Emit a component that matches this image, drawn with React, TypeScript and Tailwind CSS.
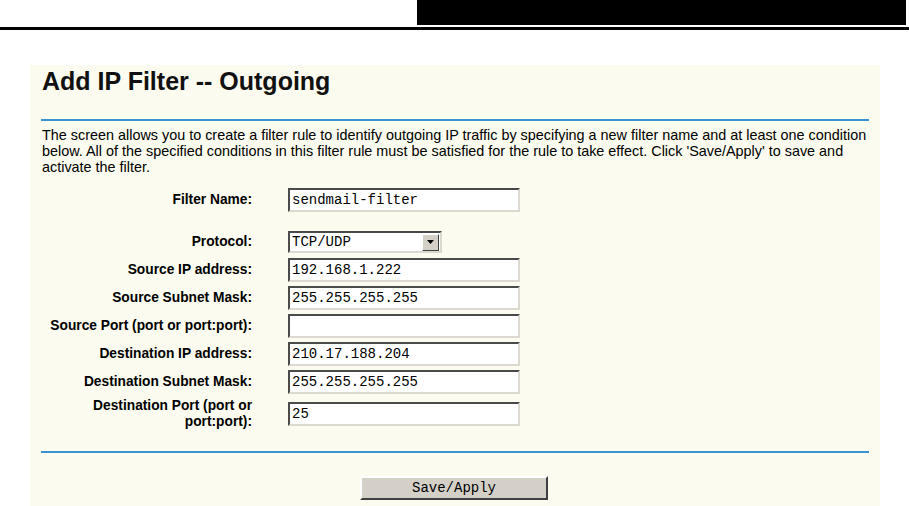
import React from "react";

const sans = { fontFamily: '"Liberation Sans", Arial, sans-serif' };
const mono = { fontFamily: '"Liberation Mono", "Courier New", monospace' };

interface FieldProps {
  label: React.ReactNode;
  value?: string;
  tall?: boolean;
}

function Field({ label, value = "", tall }: FieldProps) {
  return (
    <>
      <div
        className={`flex items-center justify-end text-right text-[13.75px] font-bold leading-[16px] text-black ${tall ? "h-[32px]" : "h-[24px]"}`}
      >
        {label}
      </div>
      <div className={`flex items-center ${tall ? "h-[32px]" : "h-[24px]"}`}>
        <div
          className="flex h-[24px] w-[232px] items-center border-2 border-t-[#4a4a4a] border-l-[#4a4a4a] border-r-[#dcd9d0] border-b-[#dcd9d0] bg-white pl-[2px] text-[14px] text-black"
          style={mono}
        >
          {value}
        </div>
      </div>
    </>
  );
}

export default function App() {
  return (
    <div className="h-[506px] w-[909px] overflow-hidden bg-white" style={sans}>
      {/* page header */}
      <div className="flex justify-end pr-[3px]">
        <div className="h-[25px] w-[489px] bg-black" />
      </div>
      <div className="mt-[2px] h-[3px] w-full bg-black" />

      <div className="ml-[30px] mt-[35px] h-[441px] w-[850px] bg-[#fbfcef] px-[11px]">
        <h1 className="pt-[2px] pl-[1px] text-[25px] font-bold leading-[28px] text-[#111]">
          Add IP Filter -- Outgoing
        </h1>
        <div className="mt-[24px] h-[2px] bg-[#3d93cf]" />

        <p className="mt-[6px] whitespace-nowrap pl-[1px] text-[14.4px] leading-[16px] text-black">
          The screen allows you to create a filter rule to identify outgoing IP traffic by specifying a new filter name and at least one condition
          <br />
          below. All of the specified conditions in this filter rule must be satisfied for the rule to take effect. Click 'Save/Apply' to save and
          <br />
          activate the filter.
        </p>

        <div className="mt-[13px] grid grid-cols-[211px_232px] gap-x-[36px] gap-y-[4px]">
          <Field label="Filter Name:" value="sendmail-filter" />
          <div className="col-span-2 h-[10px]" />

          <div className="flex h-[24px] items-center justify-end text-[13.75px] font-bold text-black">Protocol:</div>
          <div className="flex h-[24px] items-center">
            <div className="flex h-[22px] w-[154px] items-center border-2 border-t-[#4a4a4a] border-l-[#4a4a4a] border-r-[#dcd9d0] border-b-[#dcd9d0] bg-white">
              <span className="flex-1 pl-[2px] text-[14px] text-black" style={mono}>
                TCP/UDP
              </span>
              <span className="mr-[1px] flex h-[17px] w-[17px] items-center justify-center border border-t-white border-l-white border-r-[#404040] border-b-[#404040] bg-[#d4d0c8]">
                <svg width="7" height="4" viewBox="0 0 7 4">
                  <path d="M0 0h7L3.5 4z" fill="#000" />
                </svg>
              </span>
            </div>
          </div>

          <Field label="Source IP address:" value="192.168.1.222" />
          <Field label="Source Subnet Mask:" value="255.255.255.255" />
          <Field label="Source Port (port or port:port):" />
          <Field label="Destination IP address:" value="210.17.188.204" />
          <Field label="Destination Subnet Mask:" value="255.255.255.255" />
          <Field
            tall
            label={
              <span>
                Destination Port (port or
                <br />
                port:port):
              </span>
            }
            value="25"
          />
        </div>

        <div className="mt-[21px] h-[2px] bg-[#3d93cf]" />

        <div className="mt-[23px] flex pl-[319px]">
          <button
            className="h-[24px] w-[188px] border-2 border-t-white border-l-white border-r-[#404040] border-b-[#404040] bg-[#d4d0c8] text-[14px] text-black"
            style={mono}
          >
            Save/Apply
          </button>
        </div>
      </div>
    </div>
  );
}
